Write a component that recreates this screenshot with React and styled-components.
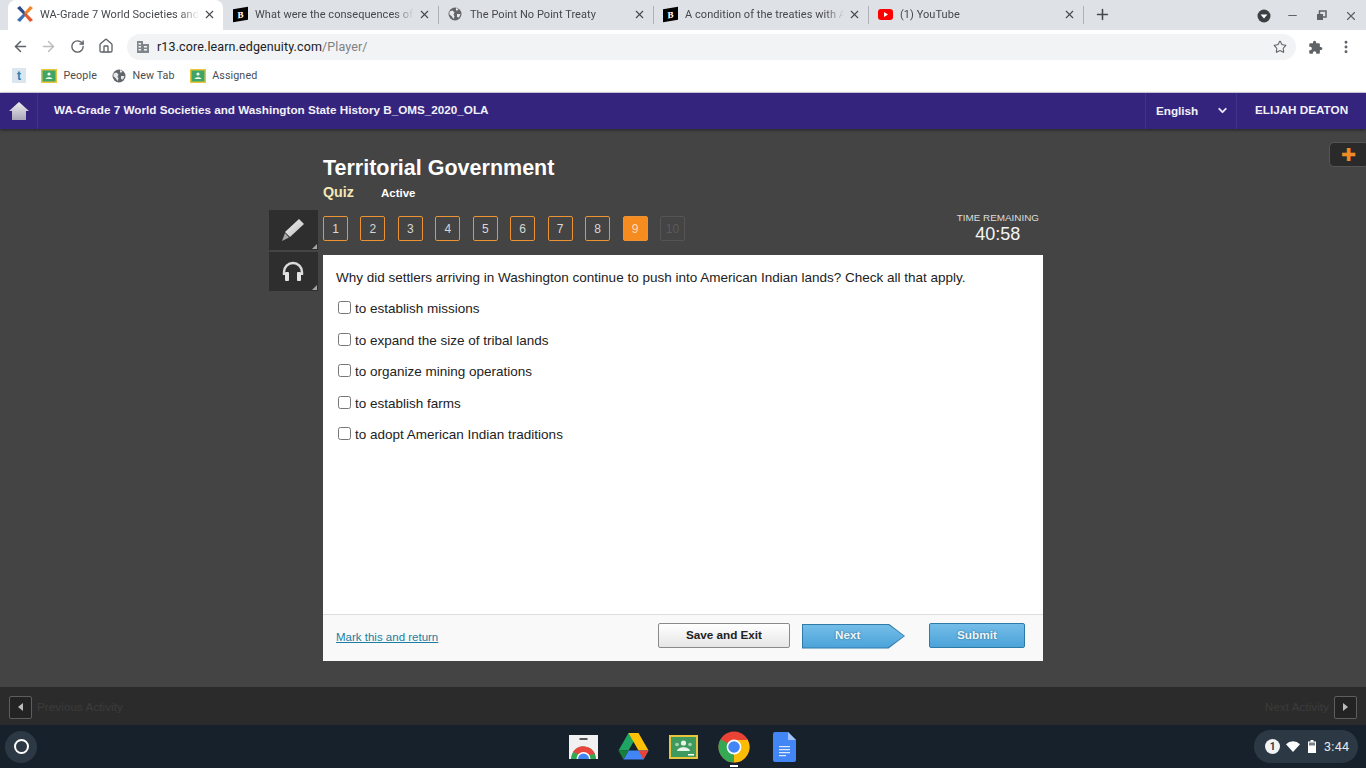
import React from 'react'
import styled, { createGlobalStyle } from 'styled-components'
import { ArrowLeft, ArrowRight, RotateCw, Home, Star, MoreVertical, X, Plus, Minus, ChevronDown } from 'lucide-react'

const GlobalStyle = createGlobalStyle`
  html, body { margin: 0; padding: 0; background: #444; }
  * { box-sizing: border-box; }
`

const tabs = [
  { icon: 'edge', title: 'WA-Grade 7 World Societies and Washington', active: true },
  { icon: 'brainly', title: 'What were the consequences of the treaties' },
  { icon: 'globe', title: 'The Point No Point Treaty', divider: true },
  { icon: 'brainly', title: 'A condition of the treaties with American', divider: true },
  { icon: 'youtube', title: '(1) YouTube', divider: true },
]

const options = [
  'to establish missions',
  'to expand the size of tribal lands',
  'to organize mining operations',
  'to establish farms',
  'to adopt American Indian traditions',
]

const pages = [1, 2, 3, 4, 5, 6, 7, 8, 9, 10]

function EdgeLogo() {
  return (
    <svg width="16" height="16" viewBox="0 0 16 16">
      <path d="M0 2 L3 0 L9 7 L7 9 Z" fill="#2b4a86" />
      <path d="M16 2 L13 0 L7 7 L9 9 Z" fill="#f0862a" />
      <path d="M0 14 L3 16 L9 9 L7 7 Z" fill="#3a6fb5" />
      <path d="M16 14 L13 16 L7 9 L9 7 Z" fill="#e4572e" />
    </svg>
  )
}

function GlobeIcon({ size = 14 }) {
  return (
    <svg width={size} height={size} viewBox="0 0 14 14">
      <circle cx="7" cy="7" r="6.5" fill="#62666a" />
      <path d="M1.5 4.5 L4.5 3.5 L6.5 5.5 L5.5 7.5 L6.5 9.5 L5.5 12 L3.5 9 L1.5 7.5 Z M8 1 L10.5 2 L9.5 3.5 L8 3.5 Z M9 7 L12.5 7 L11 10.5 L9 10 Z" fill="#e6e8ea" />
    </svg>
  )
}

function YoutubeIcon() {
  return (
    <svg width="15" height="11" viewBox="0 0 15 11">
      <rect width="15" height="11" rx="3" fill="#f00" />
      <path d="M6 3 L10 5.5 L6 8 Z" fill="#fff" />
    </svg>
  )
}

function ClassroomIcon() {
  return (
    <svg width="16" height="14" viewBox="0 0 16 14">
      <rect width="16" height="14" fill="#e8c53a" />
      <rect x="1.5" y="1.5" width="13" height="11" fill="#3fa567" />
      <circle cx="8" cy="5" r="1.6" fill="#f2f7f2" />
      <path d="M4.5 10 C5 7.5 11 7.5 11.5 10 Z" fill="#f2f7f2" />
    </svg>
  )
}

function Favicon({ kind }) {
  if (kind === 'edge') return <EdgeLogo />
  if (kind === 'globe') return <GlobeIcon />
  if (kind === 'youtube') return <YoutubeIcon />
  return <BrainlyMark>B</BrainlyMark>
}

function PuzzleIcon() {
  return (
    <svg width="15" height="15" viewBox="0 0 24 24" fill="#5f6368">
      <path d="M20.5 11H19V7c0-1.1-.9-2-2-2h-4V3.5a2.5 2.5 0 0 0-5 0V5H4c-1.1 0-2 .9-2 2v3.8h1.5a2.7 2.7 0 0 1 0 5.4H2V20c0 1.1.9 2 2 2h3.8v-1.5a2.7 2.7 0 0 1 5.4 0V22H17c1.1 0 2-.9 2-2v-4h1.5a2.5 2.5 0 0 0 0-5z" />
    </svg>
  )
}

function ProfileDot() {
  return (
    <svg width="14" height="14" viewBox="0 0 14 14">
      <circle cx="7" cy="7" r="6.5" fill="#3c4043" />
      <path d="M3.6 5.4 H10.4 L7 9.4 Z" fill="#fff" />
    </svg>
  )
}

function RestoreIcon() {
  return (
    <svg width="11" height="11" viewBox="0 0 11 11" fill="none" stroke="#5f6368" strokeWidth="1.5">
      <rect x="3.5" y="1" width="6.5" height="6" />
      <rect x="1" y="4" width="6" height="6" fill="#5f6368" stroke="none" />
    </svg>
  )
}

function BuildingIcon() {
  return (
    <svg width="12" height="12" viewBox="0 0 12 12" fill="#80868b">
      <path d="M0 0 H6 V3 H12 V12 H0 Z" />
      <path d="M1.5 2 H4 V3.5 H1.5 Z M1.5 5 H4 V6.5 H1.5 Z M1.5 8 H4 V9.5 H1.5 Z M7 5 H10 V6.5 H7 Z M7 8 H10 V9.5 H7 Z" fill="#f1f3f4" />
    </svg>
  )
}

function HouseIcon() {
  return (
    <svg width="20" height="18" viewBox="0 0 20 18">
      <defs>
        <linearGradient id="roof" x1="0" y1="0" x2="0" y2="1">
          <stop offset="0" stopColor="#eee" />
          <stop offset="1" stopColor="#a9a6b8" />
        </linearGradient>
      </defs>
      <path d="M10 0 L20 9 H17 V18 H3 V9 H0 Z" fill="url(#roof)" />
    </svg>
  )
}

function PenIcon() {
  return (
    <svg width="24" height="24" viewBox="0 0 24 24">
      <defs>
        <linearGradient id="pen" x1="0" y1="0" x2="1" y2="1">
          <stop offset="0" stopColor="#f2f2f2" />
          <stop offset="1" stopColor="#bdbdbd" />
        </linearGradient>
      </defs>
      <path d="M18 1 L23 6 L9 19 L4 14 Z" fill="url(#pen)" />
      <path d="M4 15 L8 19.5 L1 23 Z" fill="#a8a8a8" />
    </svg>
  )
}

function HeadphonesIcon() {
  return (
    <svg width="24" height="21" viewBox="0 0 24 21" fill="none">
      <path d="M3 14 V11 A9 9 0 0 1 21 11 V14" stroke="#dcdcdc" strokeWidth="2.4" />
      <rect x="4" y="11" width="4" height="9" rx="1" fill="#e4e4e4" />
      <rect x="16" y="11" width="4" height="9" rx="1" fill="#e4e4e4" />
    </svg>
  )
}

function WebStoreIcon() {
  return (
    <svg width="29" height="24" viewBox="0 0 29 24">
      <path d="M0 0 H29 V24 H0 Z" fill="#f1f1f1" />
      <rect x="10.5" y="3" width="8" height="2" fill="#555" />
      <path d="M2 24 A12.5 12.5 0 0 1 27 24 Z" fill="#34a853" />
      <path d="M4 17 A12.5 12.5 0 0 1 26 19 L14 21 Z" fill="#e8453c" />
      <circle cx="14.5" cy="24" r="7" fill="#fff" />
      <path d="M9 24 A5.5 5.5 0 0 1 20 24 Z" fill="#4285f4" />
    </svg>
  )
}

function DriveIcon() {
  return (
    <svg width="31" height="27" viewBox="0 0 31 27">
      <path d="M10.5 0 H20.5 L10.5 17.5 H0.5 Z" fill="#1fa463" />
      <path d="M10.5 0 H20.5 L30.5 17.5 H20.5 Z" fill="#ffc107" />
      <path d="M5.5 26.5 L10.5 17.5 H30.5 L25.5 26.5 Z" fill="#4285f4" />
      <path d="M0.5 17.5 H10.5 L5.5 26.5 Z" fill="#188038" />
      <path d="M20.5 17.5 H30.5 L25.5 26.5 Z" fill="#ea4335" />
    </svg>
  )
}

function BoardIcon() {
  return (
    <svg width="29" height="24" viewBox="0 0 29 24">
      <rect width="29" height="24" fill="#e8c53a" />
      <rect x="2" y="2" width="25" height="20" fill="#3f9a5e" />
      <circle cx="14.5" cy="8" r="2.6" fill="#e8f3ea" />
      <circle cx="8" cy="9.5" r="1.8" fill="#a6d3b3" />
      <circle cx="21" cy="9.5" r="1.8" fill="#a6d3b3" />
      <path d="M8 16 C9 11 20 11 21 16 Z" fill="#e8f3ea" />
      <rect x="19" y="19" width="6" height="1.5" fill="#fff" />
    </svg>
  )
}

function ChromeIcon() {
  return (
    <svg width="32" height="32" viewBox="0 0 32 32">
      <circle cx="16" cy="16" r="15.5" fill="#ea4335" />
      <path d="M16 16 L2.6 8.2 A15.5 15.5 0 0 0 16 31.5 Z" fill="#34a853" />
      <path d="M16 16 L16 31.5 A15.5 15.5 0 0 0 29.4 8.2 Z" fill="#fbbc04" />
      <path d="M16 9 H29.4 L25 16 H16 Z" fill="#fbbc04" />
      <circle cx="16" cy="16" r="7.4" fill="#fff" />
      <circle cx="16" cy="16" r="5.8" fill="#4285f4" />
    </svg>
  )
}

function DocsIcon() {
  return (
    <svg width="23" height="30" viewBox="0 0 23 30">
      <path d="M2 0 H15 L23 8 V28 A2 2 0 0 1 21 30 H2 A2 2 0 0 1 0 28 V2 A2 2 0 0 1 2 0 Z" fill="#4285f4" />
      <path d="M15 0 L23 8 H15 Z" fill="#a1c2fa" />
      <path d="M6 14 H17 V15.2 H6 Z M6 17 H17 V18.2 H6 Z M6 20 H17 V21.2 H6 Z M6 23 H13 V24.2 H6 Z" fill="#dbe7fc" />
    </svg>
  )
}

function WifiIcon() {
  return (
    <svg width="14" height="11" viewBox="0 0 14 11">
      <path d="M0 3.2 A10 10 0 0 1 14 3.2 L7 11 Z" fill="#fff" />
    </svg>
  )
}

function BatteryIcon() {
  return (
    <svg width="8" height="13" viewBox="0 0 8 13">
      <path d="M2.5 0 H5.5 V1.5 H8 V13 H0 V1.5 H2.5 Z" fill="#fff" />
      <rect x="1" y="2.5" width="6" height="3" fill="#77808a" />
    </svg>
  )
}

export default function App() {
  return (
    <Page>
      <GlobalStyle />

      <TabStrip>
        {tabs.map((tab) => (
          <Tab key={tab.title} $active={tab.active} $divider={tab.divider}>
            <TabIcon><Favicon kind={tab.icon} /></TabIcon>
            <TabTitle>{tab.title}</TabTitle>
            <X size={13} strokeWidth={2} color="#45484c" />
          </Tab>
        ))}
        <NewTab><Plus size={17} strokeWidth={2.2} color="#45484c" /></NewTab>
        <WindowControls>
          <ProfileDot />
          <Minus size={13} strokeWidth={2.2} color="#5f6368" />
          <RestoreIcon />
          <X size={14} strokeWidth={2} color="#5f6368" />
        </WindowControls>
      </TabStrip>

      <Toolbar>
        <NavIcons>
          <ArrowLeft size={17} strokeWidth={2.2} color="#5f6368" />
          <ArrowRight size={17} strokeWidth={2} color="#babcbe" />
          <RotateCw size={15} strokeWidth={2.2} color="#5f6368" />
          <Home size={16} strokeWidth={2} color="#5f6368" />
        </NavIcons>
        <Omnibox>
          <BuildingIcon />
          <Url>r13.core.learn.edgenuity.com<UrlPath>/Player/</UrlPath></Url>
          <Star size={14} strokeWidth={1.8} color="#5f6368" />
        </Omnibox>
        <ToolbarEnd>
          <PuzzleIcon />
          <MoreVertical size={16} strokeWidth={2.4} color="#5f6368" />
        </ToolbarEnd>
      </Toolbar>

      <Bookmarks>
        <TumblrMark>t</TumblrMark>
        <Bookmark><ClassroomIcon />People</Bookmark>
        <Bookmark><GlobeIcon />New Tab</Bookmark>
        <Bookmark><ClassroomIcon />Assigned</Bookmark>
      </Bookmarks>

      <CourseBar>
        <HomeCell><HouseIcon /></HomeCell>
        <CourseTitle>WA-Grade 7 World Societies and Washington State History B_OMS_2020_OLA</CourseTitle>
        <LanguageCell>English<ChevronDown size={13} strokeWidth={3.5} color="#e8e6f2" /></LanguageCell>
        <UserCell>ELIJAH DEATON</UserCell>
      </CourseBar>

      <Main>
        <Flyout>✚</Flyout>
        <Stage>
          <Tools>
            <ToolButton $h={40}><PenIcon /></ToolButton>
            <ToolButton $h={39}><HeadphonesIcon /></ToolButton>
          </Tools>
          <Column>
            <Title>Territorial Government</Title>
            <SubRow>
              <Quiz>Quiz</Quiz>
              <Status>Active</Status>
            </SubRow>
            <PageRow>
              <Pages>
                {pages.map((n) => (
                  <PageButton key={n} $current={n === 9} $disabled={n === 10}>{n}</PageButton>
                ))}
              </Pages>
              <Timer>
                <TimerLabel>TIME REMAINING</TimerLabel>
                <TimerValue>40:58</TimerValue>
              </Timer>
            </PageRow>
            <Card>
              <CardBody>
                <Question>Why did settlers arriving in Washington continue to push into American Indian lands? Check all that apply.</Question>
                <Options>
                  {options.map((o) => (
                    <Option key={o}>
                      <input type="checkbox" />
                      {o}
                    </Option>
                  ))}
                </Options>
              </CardBody>
              <CardFooter>
                <MarkLink>Mark this and return</MarkLink>
                <FooterButtons>
                  <SaveButton>Save and Exit</SaveButton>
                  <NextButton><span>Next</span></NextButton>
                  <SubmitButton>Submit</SubmitButton>
                </FooterButtons>
              </CardFooter>
            </Card>
          </Column>
        </Stage>
      </Main>

      <ActivityBar>
        <ActivityLink>
          <ArrowBox $dir="left" />
          Previous Activity
        </ActivityLink>
        <ActivityLink>
          Next Activity
          <ArrowBox $dir="right" />
        </ActivityLink>
      </ActivityBar>

      <Shelf>
        <Launcher><LauncherRing /></Launcher>
        <ShelfApps>
          <ShelfApp><WebStoreIcon /></ShelfApp>
          <ShelfApp><DriveIcon /></ShelfApp>
          <ShelfApp><BoardIcon /></ShelfApp>
          <ShelfApp $running><ChromeIcon /></ShelfApp>
          <ShelfApp><DocsIcon /></ShelfApp>
        </ShelfApps>
        <Tray>
          <TrayBadge>1</TrayBadge>
          <WifiIcon />
          <TrayBattery><BatteryIcon /></TrayBattery>
          <Clock>3:44</Clock>
        </Tray>
      </Shelf>
    </Page>
  )
}

const Page = styled.div`
  width: 1366px;
  height: 768px;
  overflow: hidden;
  display: flex;
  flex-direction: column;
  font-family: "Liberation Sans", Arial, sans-serif;
  background: #444;
`

const TabStrip = styled.div`
  height: 30px;
  flex: none;
  display: flex;
  padding-left: 8px;
  background: #dee1e6;
  font-family: Roboto, sans-serif;
`

const Tab = styled.div`
  position: relative;
  width: 215px;
  display: flex;
  align-items: center;
  padding: 0 7px 2px 9px;
  border-radius: 8px 8px 0 0;
  background: ${(p) => (p.$active ? '#fff' : 'transparent')};

  ${(p) => p.$divider && `
    &::before {
      content: '';
      position: absolute;
      left: 0;
      top: 6px;
      height: 18px;
      width: 1px;
      background: #aeb1b5;
    }
  `}
`

const TabIcon = styled.span`
  width: 16px;
  flex: none;
  display: flex;
  justify-content: center;
  align-items: center;
`

const TabTitle = styled.span`
  flex: 1;
  min-width: 0;
  margin: 0 4px 0 7px;
  font-size: 11px;
  letter-spacing: 0.05px;
  color: #45484c;
  white-space: nowrap;
  overflow: hidden;
  -webkit-mask-image: linear-gradient(to right, #000 88%, transparent 100%);
  mask-image: linear-gradient(to right, #000 88%, transparent 100%);
`

const BrainlyMark = styled.span`
  width: 15px;
  height: 13px;
  display: flex;
  align-items: center;
  justify-content: center;
  background: #000;
  color: #fff;
  font: bold 9px "Liberation Serif", serif;
  transform: skewY(-10deg);
`

const NewTab = styled.div`
  position: relative;
  width: 38px;
  display: flex;
  align-items: center;
  justify-content: center;
  padding-bottom: 2px;

  &::before {
    content: '';
    position: absolute;
    left: 0;
    top: 6px;
    height: 18px;
    width: 1px;
    background: #aeb1b5;
  }
`

const WindowControls = styled.div`
  margin-left: auto;
  display: grid;
  grid-template-columns: repeat(4, 29px);
  justify-items: center;
  align-items: center;
  padding: 1px 1px 0 0;
`

const Toolbar = styled.div`
  height: 32px;
  flex: none;
  display: flex;
  align-items: center;
  padding-top: 2px;
  background: #fff;
`

const NavIcons = styled.div`
  width: 127px;
  flex: none;
  display: grid;
  grid-template-columns: 28px 29px 29px 28px;
  justify-items: center;
  align-items: center;
  padding: 0 0 2px 6px;
`

const Omnibox = styled.div`
  width: 1169px;
  height: 26px;
  flex: none;
  display: flex;
  align-items: center;
  padding: 0 9px 0 10px;
  border-radius: 13px;
  background: #f1f3f4;
`

const Url = styled.span`
  flex: 1;
  margin: 0 0 2px 8px;
  font: 12.5px Roboto, sans-serif;
  letter-spacing: 0.12px;
  color: #202124;
`

const UrlPath = styled.span`
  color: #7d8185;
`

const ToolbarEnd = styled.div`
  flex: 1;
  display: flex;
  justify-content: space-between;
  align-items: center;
  padding: 0 12px;
`

const Bookmarks = styled.div`
  height: 31px;
  flex: none;
  display: flex;
  align-items: center;
  padding: 0 0 3px 12px;
  background: #fff;
  border-bottom: 1px solid #d9d6ea;
`

const TumblrMark = styled.span`
  width: 14px;
  height: 15px;
  margin-right: 15px;
  display: flex;
  align-items: center;
  justify-content: center;
  background: #dbe6ee;
  color: #2f7fb5;
  font: bold 12px Roboto, sans-serif;
`

const Bookmark = styled.span`
  display: flex;
  align-items: center;
  gap: 6.5px;
  margin-right: 15px;
  font: 10.7px Roboto, sans-serif;
  letter-spacing: 0.12px;
  color: #4a4d51;
`

const CourseBar = styled.header`
  position: relative;
  z-index: 1;
  height: 36px;
  flex: none;
  display: flex;
  align-items: stretch;
  background: #35247e;
  box-shadow: 0 1px 3px rgba(0, 0, 0, 0.5);
  color: #f2f1f8;
  font-size: 11.7px;
  font-weight: bold;
`

const HomeCell = styled.div`
  width: 38px;
  flex: none;
  display: flex;
  align-items: center;
  justify-content: center;
  border-right: 1px solid #42338a;
`

const CourseTitle = styled.div`
  flex: 1;
  padding-left: 16px;
  line-height: 34px;
`

const LanguageCell = styled.div`
  width: 91px;
  flex: none;
  display: flex;
  align-items: center;
  justify-content: space-between;
  padding: 0 7px 2px 10px;
  border-left: 1px solid #42338a;
`

const UserCell = styled.div`
  width: 130px;
  flex: none;
  padding-left: 18px;
  line-height: 34px;
  border-left: 1px solid #42338a;
`

const Main = styled.main`
  position: relative;
  flex: 1;
  min-height: 0;
  background: #444;
`

const Flyout = styled.div`
  position: absolute;
  top: 13px;
  right: -3px;
  width: 40px;
  height: 25px;
  padding-left: 11px;
  border: 1px solid #555;
  border-radius: 5px;
  background: #2a2a2a;
  color: #f08a24;
  font-size: 18px;
  line-height: 24px;
`

const Stage = styled.div`
  display: flex;
  padding: 26px 0 0 269px;
`

const Tools = styled.div`
  width: 49px;
  margin: 55px 5px 0 0;
  flex: none;
  display: flex;
  flex-direction: column;
  gap: 2px;
`

const ToolButton = styled.div`
  position: relative;
  height: ${(p) => p.$h}px;
  padding-right: 2px;
  display: flex;
  align-items: center;
  justify-content: center;
  background: #2e2e2e;

  &::after {
    content: '';
    position: absolute;
    right: 1px;
    bottom: 1px;
    border-left: 5px solid transparent;
    border-bottom: 5px solid #a5a5a5;
  }
`

const Column = styled.div`
  width: 720px;
  flex: none;
`

const Title = styled.h1`
  margin: 0;
  font-size: 21.5px;
  line-height: 27px;
  font-weight: bold;
  color: #fff;
`

const SubRow = styled.div`
  height: 22px;
  display: flex;
  align-items: center;
  gap: 27px;
`

const Quiz = styled.span`
  margin-bottom: 2px;
  font-size: 14.3px;
  font-weight: bold;
  color: #f5e7b5;
`

const Status = styled.span`
  font-size: 11.5px;
  font-weight: bold;
  color: #fff;
`

const PageRow = styled.div`
  height: 51px;
  display: flex;
  justify-content: space-between;
  align-items: flex-start;
  padding: 12px 4px 0 0;
`

const Pages = styled.div`
  display: flex;
  gap: 12.45px;
`

const PageButton = styled.div`
  width: 25px;
  height: 25px;
  display: flex;
  align-items: center;
  justify-content: center;
  border: 1px solid ${(p) => (p.$disabled ? '#555' : '#ec9232')};
  border-radius: 2px;
  background: ${(p) => (p.$current ? '#f68b1f' : 'transparent')};
  color: ${(p) => (p.$disabled ? '#5b5b5b' : p.$current ? '#f8dcbc' : '#d8d8d8')};
  font-size: 12px;
`

const Timer = styled.div`
  margin-top: -4px;
  text-align: center;
`

const TimerLabel = styled.div`
  font-size: 9.9px;
  line-height: 12px;
  color: #ddd;
`

const TimerValue = styled.div`
  font-size: 18px;
  line-height: 20px;
  color: #f4f4f4;
`

const Card = styled.section`
  height: 406px;
  display: flex;
  flex-direction: column;
  background: #fff;
`

const CardBody = styled.div`
  flex: 1;
  padding: 15px 13px 0;
`

const Question = styled.p`
  margin: 0;
  font-size: 13.5px;
  line-height: 16px;
  color: #222;
`

const Options = styled.div`
  margin-top: 7px;
  padding-left: 1px;
`

const Option = styled.label`
  height: 31.5px;
  display: flex;
  align-items: center;
  font-size: 13.5px;
  color: #222;

  input {
    width: 13px;
    height: 13px;
    margin: 0 4px 2px 1px;
  }
`

const CardFooter = styled.footer`
  height: 47px;
  flex: none;
  display: flex;
  align-items: center;
  justify-content: space-between;
  padding: 0 18px 0 13px;
  border-top: 1px solid #ddd;
  background: #f9f9f9;
`

const MarkLink = styled.a`
  margin-bottom: 2px;
  font-size: 11.5px;
  color: #1b7da3;
  text-decoration: underline;
`

const FooterButtons = styled.div`
  display: flex;
  align-items: center;
  margin-bottom: 6px;
`

const SaveButton = styled.div`
  width: 132px;
  height: 25px;
  padding-bottom: 1px;
  display: flex;
  align-items: center;
  justify-content: center;
  border: 1px solid #8a8a8a;
  border-radius: 2px;
  background: linear-gradient(#fff, #e6e6e6);
  color: #222;
  font-size: 11.7px;
  font-weight: bold;
`

const blueFill = 'linear-gradient(#74bde8, #4ba3d9)'

const NextButton = styled.div`
  position: relative;
  width: 103px;
  height: 25px;
  margin: 2px 24px 0 12px;
  background: #2f7ba8;
  clip-path: polygon(0 0, 84% 0, 100% 50%, 84% 100%, 0 100%);

  &::before {
    content: '';
    position: absolute;
    inset: 1px;
    background: ${blueFill};
    clip-path: polygon(0 0, 84% 0, 100% 50%, 84% 100%, 0 100%);
  }

  span {
    position: absolute;
    left: 33px;
    top: 4px;
    color: #eef6fb;
    font-size: 11.7px;
    font-weight: bold;
    text-shadow: 0 0 2px #27618a;
  }
`

const SubmitButton = styled.div`
  width: 96px;
  height: 25px;
  display: flex;
  align-items: center;
  justify-content: center;
  border: 1px solid #2f7ba8;
  border-radius: 2px;
  background: ${blueFill};
  color: #eef6fb;
  font-size: 11.8px;
  font-weight: bold;
  text-shadow: 0 0 2px #27618a;
`

const ActivityBar = styled.div`
  height: 38px;
  flex: none;
  display: flex;
  align-items: center;
  justify-content: space-between;
  padding: 2px 9px 0;
  background: #2b2b2b;
  box-shadow: 0 -1px 3px rgba(0, 0, 0, 0.35);
`

const ActivityLink = styled.div`
  display: flex;
  align-items: center;
  gap: 5px;
  color: #3c3c3c;
  font-size: 11.8px;
`

const ArrowBox = styled.span`
  width: 23px;
  height: 23px;
  display: flex;
  align-items: center;
  justify-content: center;
  border: 1px solid #5e5e5e;
  border-radius: 2px;
  background: #232323;

  &::before {
    content: '';
    border-top: 4px solid transparent;
    border-bottom: 4px solid transparent;
    ${(p) => (p.$dir === 'left' ? 'border-right: 5px solid #bbb;' : 'border-left: 5px solid #bbb;')}
  }
`

const Shelf = styled.footer`
  height: 43px;
  flex: none;
  display: flex;
  align-items: center;
  position: relative;
  padding: 0 8px 0 5px;
  background: #17212b;
`

const Launcher = styled.div`
  width: 32px;
  height: 32px;
  display: flex;
  align-items: center;
  justify-content: center;
  border-radius: 50%;
  background: #2c3944;
`

const LauncherRing = styled.span`
  width: 15px;
  height: 15px;
  border: 2px solid #fff;
  border-radius: 50%;
`

const ShelfApps = styled.div`
  margin-left: 521px;
  display: grid;
  grid-template-columns: repeat(5, 50.25px);
  justify-items: center;
  align-items: center;
`

const ShelfApp = styled.div`
  position: relative;
  height: 43px;
  display: flex;
  align-items: center;
  justify-content: center;

  ${(p) => p.$running && `
    &::after {
      content: '';
      position: absolute;
      bottom: 1px;
      left: 50%;
      margin-left: -4px;
      width: 8px;
      height: 2px;
      background: #fff;
    }
  `}
`

const Tray = styled.div`
  margin-left: auto;
  width: 104px;
  height: 33px;
  display: flex;
  align-items: center;
  gap: 6px;
  padding-left: 11px;
  border-radius: 17px;
  background: #2c3944;
`

const TrayBadge = styled.span`
  width: 15px;
  height: 15px;
  display: flex;
  align-items: center;
  justify-content: center;
  border-radius: 50%;
  background: #f1f3f4;
  color: #2c3944;
  font: bold 10px Roboto, sans-serif;
`

const TrayBattery = styled.span`
  display: flex;
  margin-left: 2px;
`

const Clock = styled.span`
  margin-left: 2px;
  color: #e8eaed;
  font: 12.5px Roboto, sans-serif;
  letter-spacing: 0.3px;
`
